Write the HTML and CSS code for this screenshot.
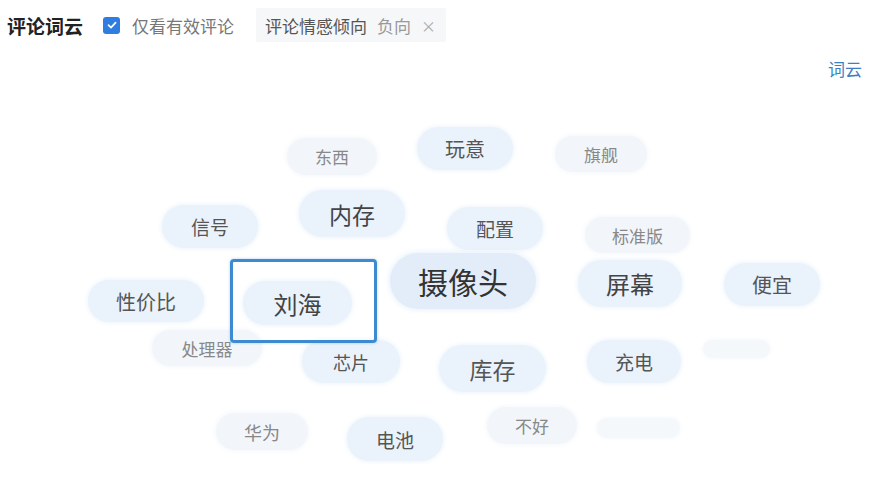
FILE: index.html
```html
<!DOCTYPE html>
<html lang="zh-CN">
<head>
  <meta charset="UTF-8" />
  <meta name="viewport" content="width=device-width, initial-scale=1.0"/>
  <title>评论词云</title>
  <link rel="stylesheet" href="styles.css">
</head>
<body>
  <div class="header">
    <h2 class="title">评论词云</h2>
    <label class="check">
      <span class="box">
        <svg width="12" height="12" viewBox="0 0 12 12"><path d="M2.5 6.2 L5 8.6 L9.6 3.6" fill="none" stroke="#fff" stroke-width="1.7" stroke-linecap="round" stroke-linejoin="round"/></svg>
      </span>
      仅看有效评论
    </label>
    <div class="filter">
      <span class="filter-name">评论情感倾向</span>
      <span class="filter-val">负向</span>
      <span class="filter-x">×</span>
    </div>
  </div>

  <div class="tabs">
    <span class="tab">词云</span>
  </div>

  <div class="cloud">
    <div class="word light" style="left:287px;top:52px;width:90px;height:37px;font-size:17px">东西</div>
    <div class="word" style="left:417px;top:41px;width:96px;height:43px;font-size:20px">玩意</div>
    <div class="word light" style="left:555px;top:50px;width:92px;height:36px;font-size:17px">旗舰</div>
    <div class="word" style="left:162px;top:119px;width:96px;height:43px;font-size:19px">信号</div>
    <div class="word strong" style="left:299px;top:104px;width:106px;height:47px;font-size:23px">内存</div>
    <div class="word" style="left:447px;top:121px;width:96px;height:43px;font-size:19px">配置</div>
    <div class="word light" style="left:585px;top:131px;width:105px;height:36px;font-size:17px">标准版</div>
    <div class="word" style="left:88px;top:194px;width:116px;height:42px;font-size:20px">性价比</div>
    <div class="word strong" style="left:243px;top:195px;width:109px;height:44px;font-size:24px">刘海</div>
    <div class="word top" style="left:390px;top:167px;width:146px;height:56px;font-size:30px">摄像头</div>
    <div class="word strong" style="left:578px;top:174px;width:104px;height:47px;font-size:24px">屏幕</div>
    <div class="word" style="left:724px;top:177px;width:96px;height:43px;font-size:20px">便宜</div>
    <div class="word light" style="left:152px;top:244px;width:110px;height:36px;font-size:17px">处理器</div>
    <div class="word" style="left:302px;top:254px;width:98px;height:43px;font-size:18px">芯片</div>
    <div class="word" style="left:439px;top:259px;width:107px;height:47px;font-size:23px">库存</div>
    <div class="word" style="left:587px;top:254px;width:94px;height:43px;font-size:19px">充电</div>
    <div class="word faint" style="left:703px;top:254px;width:67px;height:18px"></div>
    <div class="word light" style="left:216px;top:327px;width:92px;height:37px;font-size:18px">华为</div>
    <div class="word" style="left:347px;top:331px;width:96px;height:44px;font-size:19px">电池</div>
    <div class="word light" style="left:487px;top:321px;width:90px;height:37px;font-size:17px">不好</div>
    <div class="word faint" style="left:597px;top:332px;width:83px;height:20px"></div>
    <div class="selected" style="left:230px;top:173px;width:147px;height:84px"></div>
  </div>
</body>
</html>
```

FILE: styles.css
```css
body {
  font-family: "Noto Sans CJK SC", "Noto Sans", sans-serif;
  margin: 0;
  padding: 0;
  background: #fff;
  color: #333;
}
.header {
  display: flex;
  align-items: center;
  height: 50px;
  padding-left: 7px;
}
.title {
  margin: 0 20px 0 0;
  font-size: 19px;
  font-weight: bold;
  color: #222;
}
.check {
  display: flex;
  align-items: center;
  gap: 12px;
  font-size: 17px;
  color: #777;
  margin-right: 22px;
}
.box {
  width: 17px;
  height: 17px;
  border-radius: 3px;
  background: #2f7de1;
  display: flex;
  align-items: center;
  justify-content: center;
}
.filter {
  display: flex;
  align-items: center;
  height: 34px;
  padding: 0 10px 0 9px;
  background: #f5f7f9;
  border-radius: 2px;
  font-size: 17px;
}
.filter-name {
  color: #555;
  margin-right: 10px;
}
.filter-val {
  color: #999;
  margin-right: 10px;
}
.filter-x {
  color: #aaa;
  font-size: 15px;
}
.tabs {
  display: flex;
  justify-content: flex-end;
  height: 36px;
  align-items: center;
  padding-right: 8px;
}
.tab {
  font-size: 17px;
  color: #3b7fc4;
}
.cloud {
  position: relative;
  height: 406px;
}
.word {
  position: absolute;
  display: flex;
  align-items: center;
  justify-content: center;
  border-radius: 24px;
  background: #eaf2fb;
  box-shadow: 0 0 5px 1px #eef4fb;
  color: #555;
}
.word.light {
  background: #f2f6fa;
  box-shadow: 0 0 5px 1px #f4f7fb;
  color: #888;
}
.word.strong {
  color: #444;
}
.word.top {
  background: #e2edf9;
  box-shadow: 0 0 6px 1px #e8f1fb;
  color: #333;
  border-radius: 30px;
}
.word.faint {
  background: #f5f8fb;
  box-shadow: 0 0 4px 1px #f7f9fc;
}
.selected {
  position: absolute;
  box-sizing: border-box;
  border: 3px solid #3d8ad0;
  border-radius: 4px;
  box-shadow: 0 0 3px rgba(61, 138, 208, 0.4);
}
```
